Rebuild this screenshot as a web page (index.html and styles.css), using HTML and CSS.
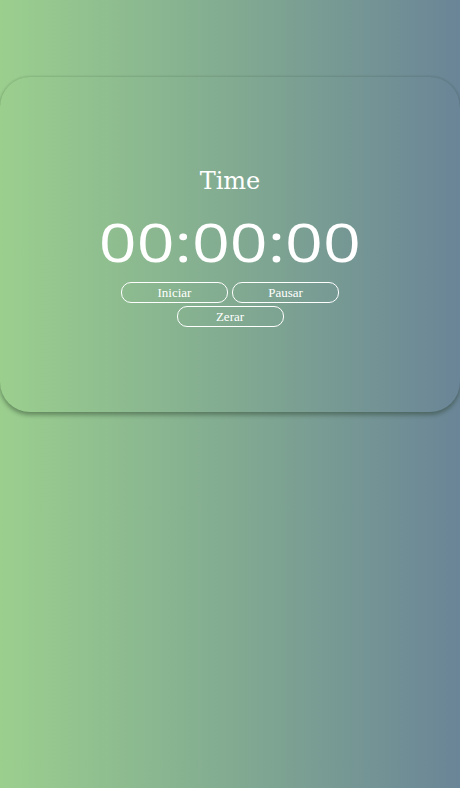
FILE: index.html
```html
<!DOCTYPE html>
<html lang="pt">
<head>
<meta charset="utf-8">
<title>Time</title>
<link rel="stylesheet" href="styles.css">
</head>
<body>
<main class="card">
  <h1 class="title">Time</h1>
  <div class="clock">00:00:00</div>
  <div class="actions">
    <button class="btn">Iniciar</button>
    <button class="btn">Pausar</button>
    <button class="btn">Zerar</button>
  </div>
</main>
</body>
</html>
```
FILE: styles.css
```css
html, body {
  margin: 0;
  height: 100%;
}
body {
  background: linear-gradient(to right, #9bcf8e 0%, #82ab91 50%, #6a8597 100%);
  padding-top: 77px;
  box-sizing: border-box;
  color: #fff;
}
.card {
  height: 335px;
  border-radius: 30px;
  box-shadow: 0 3px 4px rgba(40, 60, 40, 0.45), 0 -1px 2px rgba(40, 60, 40, 0.12);
  display: flex;
  flex-direction: column;
  align-items: center;
  padding-top: 89px;
  box-sizing: border-box;
}
.title {
  margin: 0;
  font-family: "DejaVu Serif", serif;
  font-weight: normal;
  font-size: 24px;
  line-height: 30px;
}
.clock {
  margin-top: 16px;
  font-family: "Open Sans", sans-serif;
  font-weight: 400;
  font-size: 53px;
  line-height: 60px;
  transform: scaleX(1.25);
}
.actions {
  margin-top: 10px;
  width: 230px;
  display: flex;
  flex-wrap: wrap;
  justify-content: center;
  gap: 3px 4px;
}
.btn {
  width: 107px;
  height: 21px;
  border: 1.5px solid #fff;
  border-radius: 10px;
  background: transparent;
  color: #fff;
  font-family: "Liberation Serif", serif;
  font-size: 13px;
  padding: 0;
}
```
